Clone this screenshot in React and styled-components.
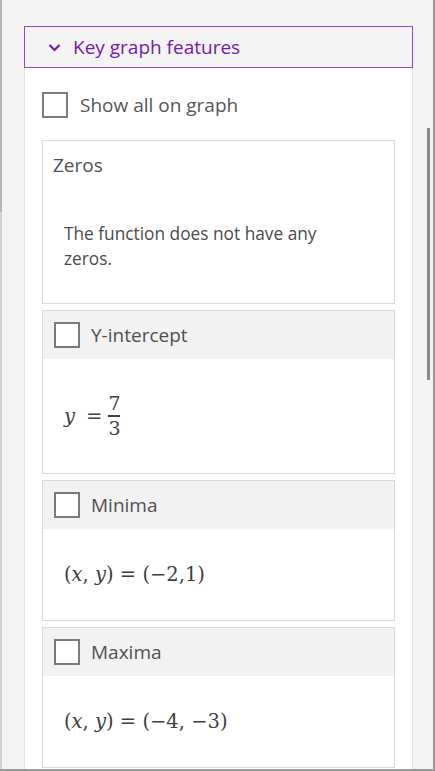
import React from 'react'
import styled, { createGlobalStyle } from 'styled-components'

const GlobalStyle = createGlobalStyle`
  html, body {
    margin: 0;
    padding: 0;
    background: #f3f3f3;
  }
  * {
    box-sizing: border-box;
  }
`

const Window = styled.div`
  display: flex;
  width: 435px;
  height: 771px;
  padding-left: 2px;
  background:
    linear-gradient(to bottom, #b4b4b4 212px, #d2d2d2 212px) left top / 2px 100% no-repeat,
    #f3f3f3;
  border-right: 2px solid #9a9a9a;
  border-bottom: 2px solid #9a9a9a;
  overflow: hidden;
  font-family: "Open Sans", "Noto Sans", sans-serif;
`

const Main = styled.div`
  display: flex;
  flex-direction: column;
  width: 411px;
  padding: 26px 0 0 22px;
`

const SectionHeader = styled.div`
  display: flex;
  align-items: center;
  height: 42px;
  padding-left: 23px;
  gap: 12px;
  border: 1px solid #9146c9;
  background: #f3f3f3;
  color: #7719aa;
  font-size: 19px;
`

const Panel = styled.div`
  flex: 1;
  display: flex;
  flex-direction: column;
  gap: 6px;
  padding: 24px 17px 0 17px;
  background: #fff;
  border-left: 1px solid #e1e1e1;
  border-right: 1px solid #dcdcdc;
`

const CheckRow = styled.label`
  display: flex;
  align-items: center;
  gap: 12px;
  margin-bottom: 16px;
  color: #555;
  font-size: 19px;
`

const Box = styled.span`
  width: 26px;
  height: 26px;
  flex: none;
  border: 2px solid #7a7a7a;
  background: #fff;
`

const Card = styled.div`
  display: flex;
  flex-direction: column;
  border: 1px solid #d9d9d9;
  background: #fff;
  flex: none;
`

const CardHeader = styled.div`
  display: flex;
  align-items: center;
  gap: 11px;
  height: 48px;
  padding-left: ${(p) => (p.$plain ? '10px' : '11px')};
  background: ${(p) => (p.$plain ? '#fff' : '#f2f2f2')};
  color: #505050;
  font-size: 19px;
`

const CardBody = styled.div`
  display: flex;
  align-items: center;
  min-height: ${(p) => p.$h}px;
  padding: 0 60px 0 21px;
  color: #4a4a4a;
  font-size: 17.3px;
  line-height: 25px;
`

const Math = styled.span`
  display: inline-flex;
  align-items: center;
  font-family: "DejaVu Serif", "Liberation Serif", serif;
  font-size: 19.5px;
  color: #3e3e3e;
  white-space: pre;
`

const Var = styled.i`
  font-style: italic;
`

const Op = styled.span`
  margin: 0 6px 0 11px;
`

const Frac = styled.span`
  display: inline-flex;
  flex-direction: column;
  align-items: center;
  font-size: 19px;
  line-height: 21px;
`

const FracBar = styled.span`
  width: 12px;
  height: 1.5px;
  margin: 1px 0 1px;
  background: #3e3e3e;
`

const Track = styled.div`
  flex: 1;
  padding: 128px 0 0 14px;
`

const Thumb = styled.div`
  width: 3px;
  height: 252px;
  background: #8a8a8a;
`

const Chevron = () => (
  <svg width="13" height="9" viewBox="0 0 13 9">
    <path d="M1.5 2 L6.5 7 L11.5 2" fill="none" stroke="#7719aa" strokeWidth="2.2" />
  </svg>
)

const features = [
  {
    title: 'Y-intercept',
    h: 114,
    math: (
      <Math>
        <Var>y</Var>
        <Op>=</Op>
        <Frac>
          <span>7</span>
          <FracBar />
          <span>3</span>
        </Frac>
      </Math>
    ),
  },
  {
    title: 'Minima',
    h: 91,
    math: (
      <Math>
        (<Var>x</Var>, <Var>y</Var>) = (−2,1)
      </Math>
    ),
  },
  {
    title: 'Maxima',
    h: 91,
    math: (
      <Math>
        (<Var>x</Var>, <Var>y</Var>) = (−4, −3)
      </Math>
    ),
  },
]

export default function App() {
  return (
    <>
      <GlobalStyle />
      <Window>
        <Main>
          <SectionHeader>
            <Chevron />
            Key graph features
          </SectionHeader>
          <Panel>
            <CheckRow>
              <Box />
              Show all on graph
            </CheckRow>
            <Card>
              <CardHeader $plain>Zeros</CardHeader>
              <CardBody $h={114}>The function does not have any zeros.</CardBody>
            </Card>
            {features.map((f) => (
              <Card key={f.title}>
                <CardHeader>
                  <Box />
                  {f.title}
                </CardHeader>
                <CardBody $h={f.h}>{f.math}</CardBody>
              </Card>
            ))}
          </Panel>
        </Main>
        <Track>
          <Thumb />
        </Track>
      </Window>
    </>
  )
}
